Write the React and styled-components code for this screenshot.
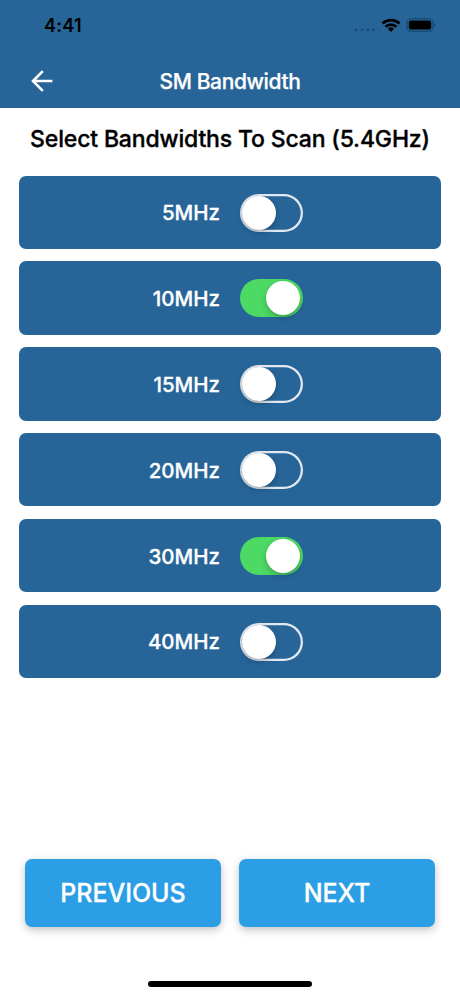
import React, { useState } from 'react';
import styled, { createGlobalStyle } from 'styled-components';

const initialBandwidths = [
  { id: 5, isOn: false },
  { id: 10, isOn: true },
  { id: 15, isOn: false },
  { id: 20, isOn: false },
  { id: 30, isOn: true },
  { id: 40, isOn: false },
];

const StatusBar = () => (
  <StatusWrap>
    <Time>4:41</Time>
    <StatusIcons width="82" height="18" viewBox="0 0 82 18">
      <g fill="#1b4c79">
        <circle cx="2" cy="12.7" r="1.5" />
        <circle cx="8" cy="12.7" r="1.5" />
        <circle cx="13.8" cy="12.7" r="1.5" />
        <circle cx="19.6" cy="12.7" r="1.5" />
      </g>
      <g fill="none" stroke="#000" strokeWidth="2.7">
        <path d="M28.5 6.4a12.4 12.4 0 0 1 17 0" />
        <path d="M31.6 9.7a7.8 7.8 0 0 1 10.8 0" />
      </g>
      <path d="M33.9 11.7a4.6 4.6 0 0 1 6.2 0L37 14.9z" fill="#000" />
      <rect x="53.1" y="1.7" width="25.8" height="12.6" rx="4" fill="none" stroke="#15436d" strokeWidth="1.1" />
      <rect x="54.8" y="3.4" width="22.4" height="9.2" rx="2.3" fill="#000" />
      <path d="M80.3 6v4.2c1.6-.6 1.6-3.6 0-4.2z" fill="#15436d" />
    </StatusIcons>
  </StatusWrap>
);

const BandwidthRow = ({ id, isOn, onToggle }) => (
  <Row>
    <RowLabel>{id}MHz</RowLabel>
    <Switch type="button" role="switch" aria-checked={isOn} aria-label={`${id}MHz`} $isOn={isOn} onClick={() => onToggle(id)}>
      <Knob />
    </Switch>
  </Row>
);

const App = () => {
  const [bandwidths, setBandwidths] = useState(initialBandwidths);

  const handleToggle = (id) => {
    setBandwidths(bandwidths.map((item) => (item.id === id ? { ...item, isOn: !item.isOn } : item)));
  }

  return (
    <Screen>
      <GlobalStyle />
      <Header>
        <StatusBar />
        <NavBar>
          <BackBtn type="button" aria-label="Back">
            <svg width="22" height="22" viewBox="0 0 22 22" fill="none" stroke="#fff" strokeWidth="2.6">
              <path d="M21.4 11H2M11.8 1.2L2 11l9.8 9.8" />
            </svg>
          </BackBtn>
          <NavTitle>SM Bandwidth</NavTitle>
        </NavBar>
      </Header>
      <Heading>Select Bandwidths To Scan (5.4GHz)</Heading>
      <List>
        {bandwidths.map((item) => (
          <BandwidthRow key={item.id} id={item.id} isOn={item.isOn} onToggle={handleToggle} />
        ))}
      </List>
      <Footer>
        <StepBtn type="button">PREVIOUS</StepBtn>
        <StepBtn type="button">NEXT</StepBtn>
      </Footer>
      <HomeIndicator />
    </Screen>
  );
};

export default App;

const GlobalStyle = createGlobalStyle`
  * {
    box-sizing: border-box;
  }

  body {
    margin: 0;
    background: #fff;
    font-family: Inter, "Liberation Sans", sans-serif;
  }

  button {
    padding: 0;
    border: none;
    background: transparent;
    font-family: inherit;
  }
`;

const Screen = styled.div`
  display: flex;
  flex-direction: column;
  width: 460px;
  height: 996px;
  overflow: hidden;
`;

const Header = styled.header`
  height: 108px;
  flex-shrink: 0;
  background: #276598;
`;

const StatusWrap = styled.div`
  display: flex;
  justify-content: space-between;
  height: 54px;
  padding: 15px 24px 0 44px;
`;

const Time = styled.span`
  font-size: 18px;
  line-height: 21px;
  font-weight: 600;
  letter-spacing: 0.25px;
  color: #000;
`;

const StatusIcons = styled.svg`
  margin-top: 1.5px;
`;

const NavBar = styled.nav`
  display: grid;
  grid-template-columns: 60px 1fr 60px;
  align-items: center;
  height: 54px;
`;

const BackBtn = styled.button`
  display: flex;
  padding-left: 30.5px;
`;

const NavTitle = styled.h1`
  margin: 0;
  padding-top: 2px;
  font-size: 21px;
  line-height: 26px;
  font-weight: 500;
  letter-spacing: -0.36px;
  text-align: center;
  white-space: nowrap;
  color: #fff;
  -webkit-text-stroke: 0.25px;
`;

const Heading = styled.h2`
  margin: 16px 0 0;
  font-size: 23px;
  line-height: 30px;
  font-weight: 500;
  letter-spacing: -0.16px;
  text-align: center;
  white-space: nowrap;
  color: #000;
  -webkit-text-stroke: 0.35px;
`;

const List = styled.div`
  display: flex;
  flex-direction: column;
  gap: 12.4px;
  margin: 21.7px 19px 0;
`;

const Row = styled.div`
  display: flex;
  align-items: center;
  gap: 20px;
  height: 73.4px;
  border-radius: 7px;
  background: #276598;
`;

const RowLabel = styled.span`
  width: 201px;
  padding-top: 2px;
  font-size: 20.5px;
  line-height: 26px;
  font-weight: 500;
  letter-spacing: 0;
  text-align: right;
  color: #fff;
  -webkit-text-stroke: 0.3px;
`;

const Switch = styled.button`
  display: flex;
  align-items: center;
  justify-content: ${props => props.$isOn ? "flex-end" : "flex-start"};
  width: 62.5px;
  height: 38px;
  margin-top: 0.6px;
  padding: 0 ${props => props.$isOn ? "2.4px" : "1.6px"};
  border-radius: 19px;
  background: ${props => props.$isOn ? "#4cd964" : "transparent"};
  box-shadow: ${props => props.$isOn ? "none" : "inset 0 0 0 2.3px #e3e8f0"};
`;

const Knob = styled.span`
  width: 34px;
  height: 34px;
  border-radius: 50%;
  background: #fff;
  box-shadow: 0 3px 6px rgba(0, 0, 0, 0.2), 0 1px 2px rgba(0, 0, 0, 0.1);
`;

const Footer = styled.footer`
  display: flex;
  gap: 18px;
  margin: auto 25px 54px;
`;

const StepBtn = styled.button`
  flex: 1;
  height: 68px;
  border-radius: 7px;
  background: #2b9ee5;
  box-shadow: 0 3px 8px rgba(0, 0, 0, 0.24);
  font-size: 25px;
  font-weight: 500;
  letter-spacing: -0.05px;
  color: #fff;
  -webkit-text-stroke: 0.3px;
`;

const HomeIndicator = styled.div`
  flex-shrink: 0;
  align-self: center;
  width: 164px;
  height: 6px;
  margin-bottom: 9px;
  border-radius: 3px;
  background: #000;
`;
